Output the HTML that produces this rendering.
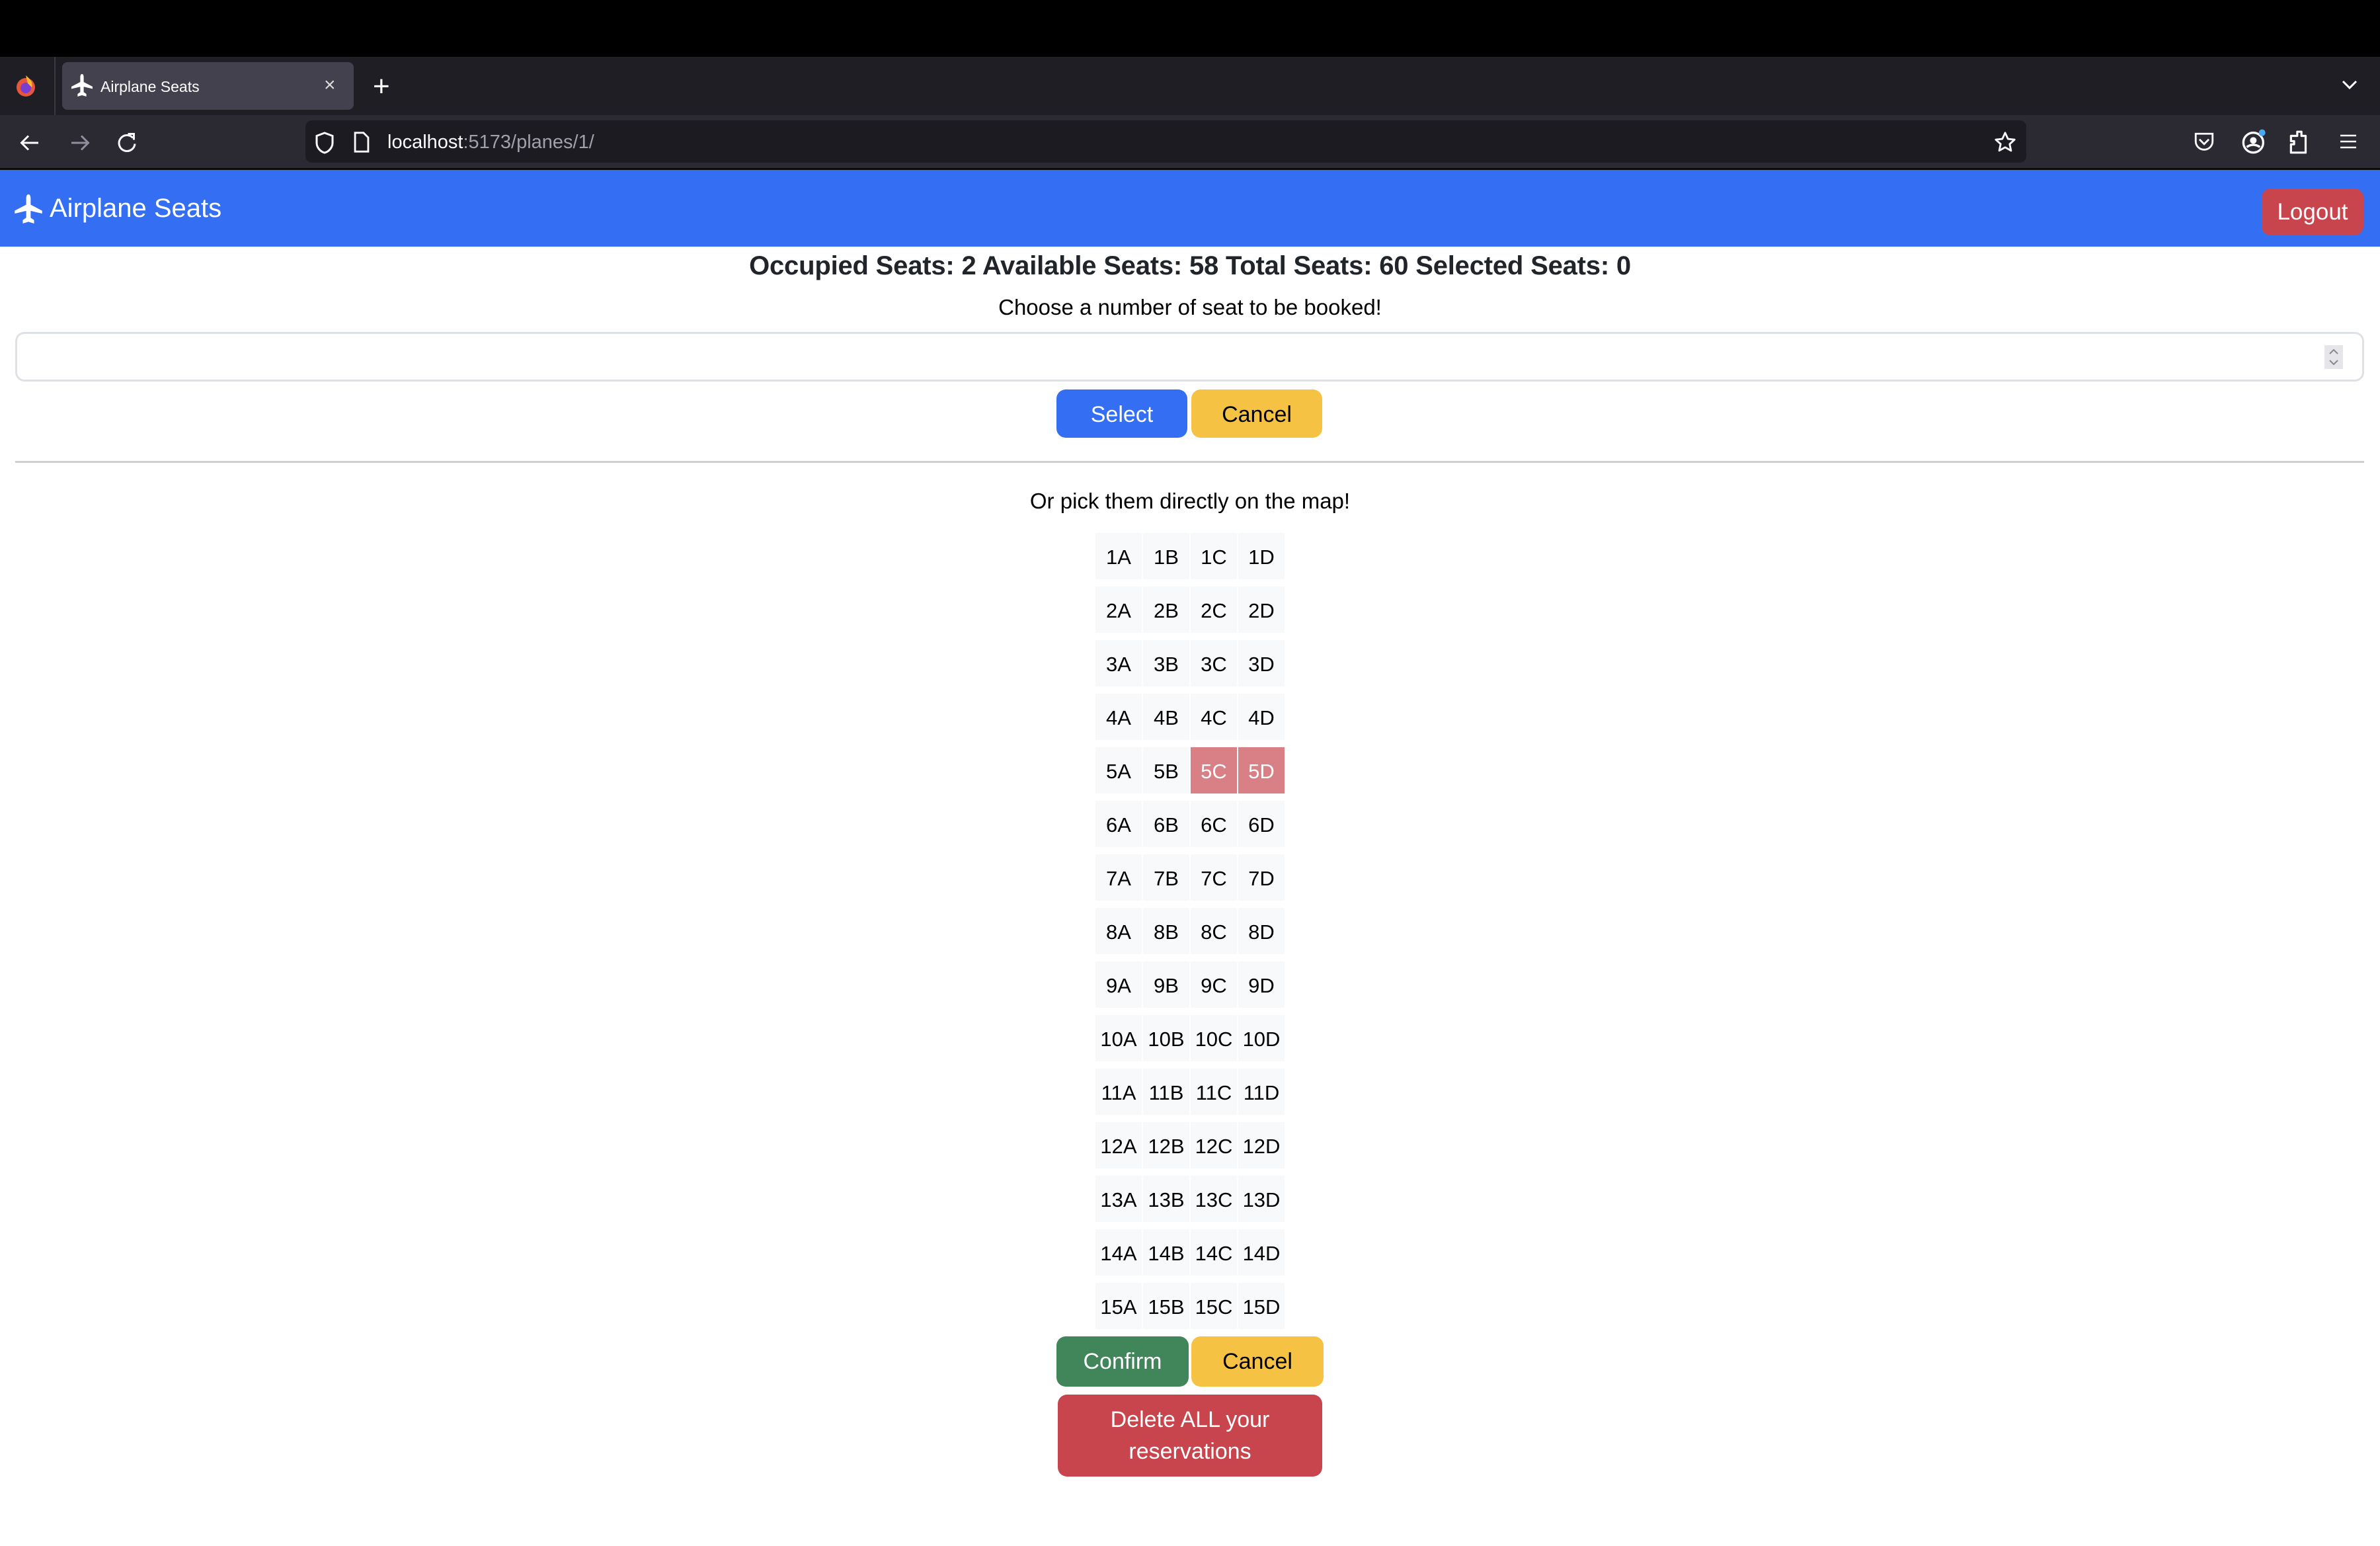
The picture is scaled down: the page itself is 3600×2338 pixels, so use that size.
<!DOCTYPE html>
<html><head><meta charset="utf-8"><style>
*{box-sizing:border-box;margin:0;padding:0}
body{width:3600px;height:2338px;background:#fff;font-family:"Liberation Sans",Arial,sans-serif;position:relative;overflow:hidden;color:#212529}
.a{position:absolute}
.btn{position:absolute;border-radius:14px;font-size:34px;display:flex;align-items:center;justify-content:center;text-align:center}
.seat{position:absolute;width:70px;height:70px;background:#f8f9fa;font-size:31px;color:#000;display:flex;align-items:center;justify-content:center;padding-top:3px}
.occ{background:#d97f86;color:#fff}
.c{position:absolute;left:0;width:3600px;text-align:center}
</style></head><body>
<div class="a" style="left:0;top:0;width:3600px;height:86px;background:#000"></div>
<div class="a" style="left:0;top:86px;width:3600px;height:88px;background:#1f1e25"></div>
<div class="a" style="left:82px;top:86px;width:2px;height:88px;background:#3a3940"></div>
<svg class="a" style="left:22px;top:112px" width="34" height="36" viewBox="0 0 34 36"><circle cx="17" cy="20" r="14" fill="#e8553b"/><circle cx="17" cy="21" r="8" fill="#7a3fd0"/><path d="M17 2 C24 8 28 12 26 20 L20 14Z" fill="#ffbd2e"/></svg>
<div class="a" style="left:94px;top:94px;width:441px;height:72px;background:#42414d;border-radius:8px"></div>
<svg class="a" style="left:108px;top:112px" width="32" height="34" viewBox="0 0 16 17"><path d="M8 0c1 0 1.3 1.2 1.3 2.5V6L16 9.5v1.7L9.3 9.6v4l2 1.4V17L8 16l-3.3 1v-2l2-1.4v-4L0 11.2V9.5L6.7 6V2.5C6.7 1.2 7 0 8 0z" fill="#fff"/></svg>
<div class="a" style="left:152px;top:118px;font-size:23px;color:#fff">Airplane Seats</div>
<div class="a" style="left:490px;top:112px;font-size:30px;color:#ddd">×</div>
<div class="a" style="left:564px;top:106px;font-size:44px;color:#fff;font-weight:300">+</div>
<svg class="a" style="left:3540px;top:118px" width="28" height="20" viewBox="0 0 28 20"><path d="M4 5l10 10 10-10" stroke="#fff" stroke-width="3" fill="none"/></svg>
<div class="a" style="left:0;top:174px;width:3600px;height:80px;background:#2b2a33"></div>
<div class="a" style="left:0;top:254px;width:3600px;height:3px;background:#0c0c0d"></div>
<svg class="a" style="left:28px;top:198px" width="36" height="36" viewBox="0 0 24 24"><path d="M20 12H4M10 5l-7 7 7 7" stroke="#fbfbfe" stroke-width="2" fill="none"/></svg>
<svg class="a" style="left:102px;top:198px" width="36" height="36" viewBox="0 0 24 24"><path d="M4 12h16M14 5l7 7-7 7" stroke="#8f8f9d" stroke-width="2" fill="none"/></svg>
<svg class="a" style="left:174px;top:198px" width="36" height="36" viewBox="0 0 24 24"><path d="M18 7a8 8 0 1 0 2 6" stroke="#fbfbfe" stroke-width="2" fill="none"/><path d="M13 3h6v6" stroke="#fbfbfe" stroke-width="2" fill="none"/></svg>
<div class="a" style="left:462px;top:182px;width:2603px;height:64px;background:#1c1b22;border-radius:10px"></div>
<svg class="a" style="left:476px;top:198px" width="30" height="36" viewBox="0 0 20 24"><path d="M10 2l8 3v7c0 5-4 9-8 10C6 21 2 17 2 12V5z" stroke="#fbfbfe" stroke-width="2" fill="none"/></svg>
<svg class="a" style="left:534px;top:198px" width="26" height="34" viewBox="0 0 18 24"><path d="M2 2h9l5 5v15H2z" stroke="#fbfbfe" stroke-width="2" fill="none"/></svg>
<div class="a" style="left:586px;top:199px;font-size:29px;color:#fbfbfe">localhost<span style="color:#a0a0a8">:5173/planes/1/</span></div>
<svg class="a" style="left:3016px;top:198px" width="34" height="34" viewBox="0 0 24 24"><path d="M12 2l3 6.5 7 .8-5.2 4.8 1.5 7L12 17.5 5.7 21l1.5-7L2 9.3l7-.8z" stroke="#fbfbfe" stroke-width="2" fill="none" stroke-linejoin="round"/></svg>
<svg class="a" style="left:3318px;top:198px" width="32" height="34" viewBox="0 0 22 24"><path d="M2 3h18v8a9 9 0 0 1-18 0z" stroke="#fbfbfe" stroke-width="2" fill="none"/><path d="M6 9l5 5 5-5" stroke="#fbfbfe" stroke-width="2" fill="none"/></svg>
<svg class="a" style="left:3390px;top:194px" width="40" height="40" viewBox="0 0 24 24"><circle cx="11" cy="13" r="9" stroke="#fbfbfe" stroke-width="2" fill="none"/><circle cx="11" cy="11" r="3" fill="#fbfbfe"/><path d="M5 17q6-4 12 0" stroke="#fbfbfe" stroke-width="2" fill="none"/><circle cx="19" cy="4" r="3" fill="#4aa8f0"/></svg>
<svg class="a" style="left:3462px;top:196px" width="32" height="38" viewBox="0 0 20 24"><path d="M2 22V14h3v-3H2V6h6V2h4v4h4v16z" stroke="#fbfbfe" stroke-width="2" fill="none" stroke-linejoin="round"/></svg>
<svg class="a" style="left:3538px;top:202px" width="28" height="24" viewBox="0 0 28 24"><path d="M2 3h24M2 12h24M2 21h24" stroke="#fbfbfe" stroke-width="2.5"/></svg>

<div class="a" style="left:0;top:257px;width:3600px;height:116px;background:#346ef3"></div>
<svg class="a" style="left:22px;top:294px" width="42" height="44" viewBox="0 0 16 17"><path d="M8 0c1 0 1.3 1.2 1.3 2.5V6L16 9.5v1.7L9.3 9.6v4l2 1.4V17L8 16l-3.3 1v-2l2-1.4v-4L0 11.2V9.5L6.7 6V2.5C6.7 1.2 7 0 8 0z" fill="#fff"/></svg>
<div class="a" style="left:75px;top:293px;font-size:40px;color:#fff">Airplane Seats</div>
<div class="btn" style="left:3421px;top:285px;width:154px;height:71px;background:#c9454d;color:#fff;font-size:35px">Logout</div>

<div class="c" style="top:376px;font-size:40px;font-weight:bold;line-height:52px;letter-spacing:-0.2px">Occupied Seats: 2 Available Seats: 58 Total Seats: 60 Selected Seats: 0</div>
<div class="c" style="top:444px;font-size:33px;line-height:42px;color:#000">Choose a number of seat to be booked!</div>
<div class="a" style="left:23px;top:502px;width:3553px;height:75px;border:3px solid #dee2e6;border-radius:14px"></div>
<div class="a" style="left:3516px;top:522px;width:28px;height:36px;background:#e6e6ea"></div>
<svg class="a" style="left:3520px;top:524px" width="20" height="32" viewBox="0 0 20 32"><path d="M4 11l6-6 6 6M4 21l6 6 6-6" stroke="#888" stroke-width="2" fill="none"/></svg>
<div class="btn" style="left:1598px;top:589px;width:198px;height:73px;background:#346ef3;color:#fff;padding-top:3px">Select</div>
<div class="btn" style="left:1802px;top:589px;width:198px;height:73px;background:#f6c244;color:#000;padding-top:3px">Cancel</div>
<div class="a" style="left:23px;top:697px;width:3553px;height:3px;background:#cfcfcf"></div>
<div class="c" style="top:737px;font-size:33px;line-height:42px;color:#000">Or pick them directly on the map!</div>

<div id="g"></div>
<script>
var g=document.getElementById('g'),h='',L=['A','B','C','D'];
for(var r=0;r<15;r++)for(var c=0;c<4;c++){var o=(r==4&&c>1)?' occ':'';h+='<div class="seat'+o+'" style="left:'+(1657+c*72)+'px;top:'+(806+r*81)+'px">'+(r+1)+L[c]+'</div>';}
g.innerHTML=h;
</script>

<div class="btn" style="left:1598px;top:2021px;width:200px;height:76px;background:#41855b;color:#fff">Confirm</div>
<div class="btn" style="left:1802px;top:2021px;width:200px;height:76px;background:#f6c244;color:#000">Cancel</div>
<div class="btn" style="left:1600px;top:2109px;width:400px;height:124px;background:#c9454d;color:#fff;line-height:48px">Delete ALL your<br>reservations</div>
</body></html>
